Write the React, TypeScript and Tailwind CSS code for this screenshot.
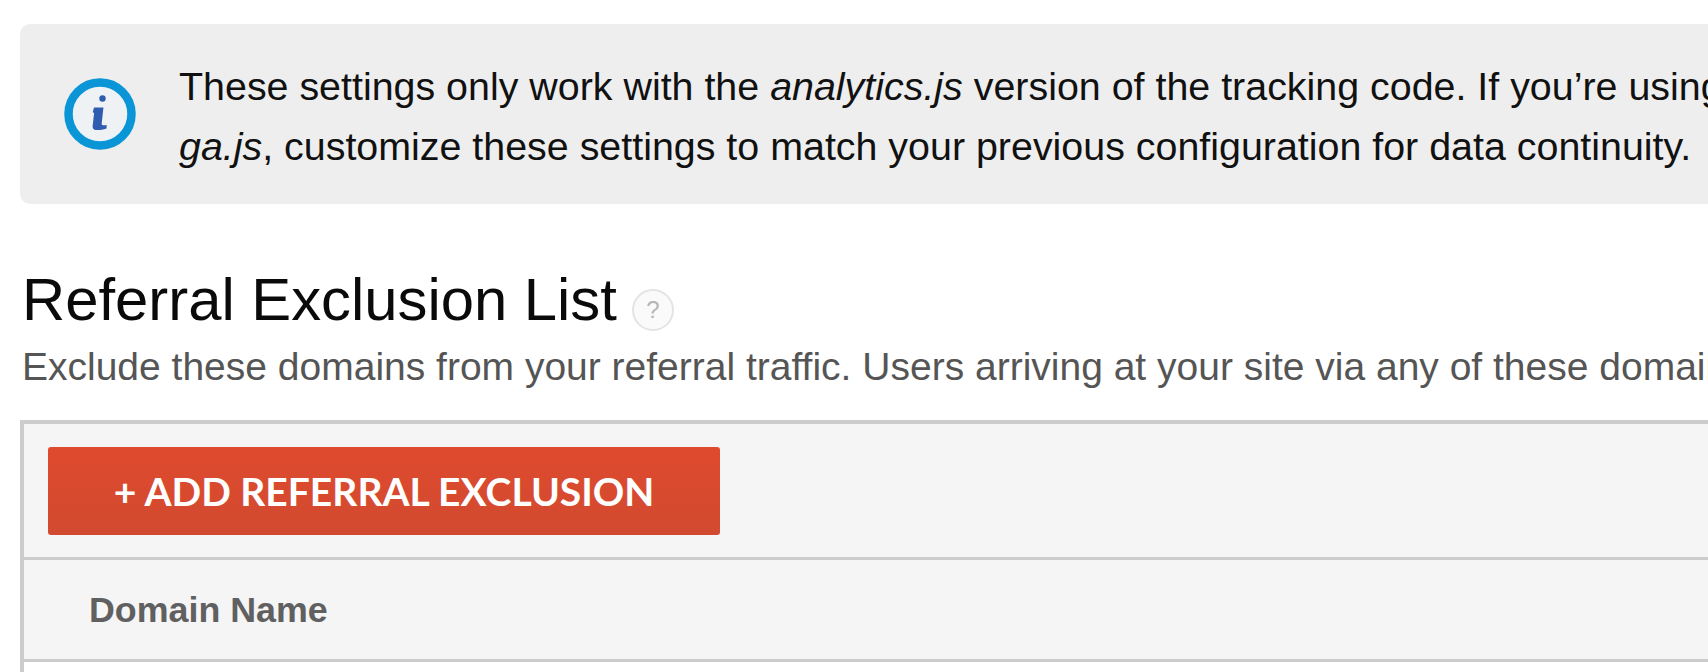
export default function App() {
  return (
    <div className="h-[672px] w-[1708px] overflow-hidden bg-white pl-[20px] pt-[24px] font-['Liberation_Sans',Arial,sans-serif]">
      <div className="w-[1800px]">
        {/* Notice */}
        <div className="flex h-[180px] items-center rounded-[10px] bg-[#eeeeee] pl-[44px]">
          <svg width="72" height="72" viewBox="0 0 72 72" className="shrink-0">
            <circle cx="36" cy="36" r="31.5" fill="#eff2f5" stroke="#0a95d6" strokeWidth="8.5" />
            <circle cx="38.5" cy="20.5" r="3.2" fill="#2f5cae" />
            <path d="M30 29.5h9.5l-.4 3-1.4 13c-.2 1.6.6 2.2 5 1.6l-.2 3.4c-2 1.4-10.6 2-12.4 1-1.4-.8-1.6-2.4-1.4-4l1.4-12.6-1.4-.6z" fill="#2f5cae" />
          </svg>
          <p className="ml-[43px] mt-[4px] whitespace-nowrap text-[39.4px] leading-[60px] text-[#111111]">
            These settings only work with the <em>analytics.js</em> version of the tracking code. If you’re using
            <br />
            <em>ga.js</em>, customize these settings to match your previous configuration for data continuity.
          </p>
        </div>

        {/* Heading */}
        <div className="mt-[64px] flex items-center pl-[2px]">
          <h1 className="text-[59.8px] font-normal leading-[64px] text-[#0a0a0a]">Referral Exclusion List</h1>
          <span className="ml-[15px] mt-[19px] flex h-[42px] w-[42px] items-center justify-center rounded-full border-2 border-[#e4e4e4] bg-[#fafafa] text-[24px] text-[#b5b5b5]">?</span>
        </div>
        <p className="mt-[12px] whitespace-nowrap pl-[2px] text-[39px] leading-[46px] text-[#555555]">
          Exclude these domains from your referral traffic. Users arriving at your site via any of these domains
        </p>

        {/* Table */}
        <div className="mt-[30px] border-l-4 border-t-4 border-[#cccccc] bg-[#f5f5f5]">
          <div className="border-b-[3px] border-[#cccccc] pb-[22px] pl-[24px] pt-[23px]">
            <button className="flex h-[88px] w-[672px] items-center justify-center rounded-[3px] bg-gradient-to-b from-[#df4a2d] to-[#d14a30] font-['Lato',sans-serif] text-[39px] font-bold text-white">
              + ADD REFERRAL EXCLUSION
            </button>
          </div>
          <div className="border-b-[3px] border-[#cccccc] pl-[65px]">
            <div className="flex h-[99px] items-center pt-[3px] text-[35.8px] font-bold text-[#606060]">Domain Name</div>
          </div>
          <div className="h-[20px] bg-white" />
        </div>
      </div>
    </div>
  );
}
